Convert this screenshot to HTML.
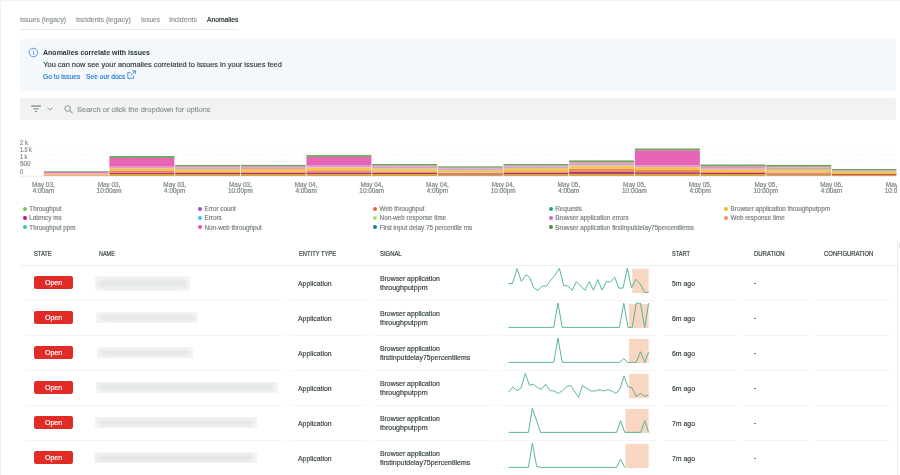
<!DOCTYPE html><html><head><meta charset="utf-8"><style>
*{margin:0;padding:0;box-sizing:border-box}
html,body{width:900px;height:475px;overflow:hidden;background:#fff;font-family:"Liberation Sans", sans-serif;}
#w{position:absolute;left:0;top:0;width:900px;height:475px;background:#fff;will-change:transform;overflow:hidden}
.a{position:absolute;white-space:nowrap;transform-origin:0 0;-webkit-text-stroke:0.18px currentColor}
.dot{position:absolute;width:4.4px;height:4.4px;border-radius:50%}
.badge{position:absolute;width:38.6px;height:12.6px;border-radius:2.2px;background:#e02b26}
.bx{position:absolute;background:#f4f5f5;overflow:hidden;border-radius:1px;filter:blur(0.6px)}
.bi{position:absolute;left:3px;right:3px;top:25%;bottom:25%;background:#e2e4e4;filter:blur(2px);border-radius:3px}
.sep{position:absolute;height:1px;background:#f4f5f5}
</style></head><body><div id="w">
<div class="a" style="left:0;top:0;width:1.3px;height:475px;background:#f0f1f1"></div>
<div class="a" style="left:0;top:0;width:900px;height:1px;background:#f3f4f4"></div>
<div class="a" style="left:20.10px;top:16.00px;font-size:7.413px;line-height:7.413px;color:#8c9393;transform:scaleX(0.9268);">Issues (legacy)</div>
<div class="a" style="left:76.10px;top:16.00px;font-size:7.413px;line-height:7.413px;color:#8c9393;transform:scaleX(0.9453);">Incidents (legacy)</div>
<div class="a" style="left:140.60px;top:16.00px;font-size:7.413px;line-height:7.413px;color:#8c9393;transform:scaleX(0.8916);">Issues</div>
<div class="a" style="left:169.40px;top:16.00px;font-size:7.413px;line-height:7.413px;color:#8c9393;transform:scaleX(0.9431);">Incidents</div>
<div class="a" style="left:206.70px;top:16.00px;font-size:7.413px;line-height:7.413px;color:#2a3437;transform:scaleX(0.9070);-webkit-text-stroke:0.22px #2a3437">Anomalies</div>
<div class="a" style="left:20px;top:28.8px;width:218px;height:1.2px;background:#e8ebeb"></div>
<div class="a" style="left:20px;top:38.5px;width:876px;height:52px;background:#f3f8fc;border-radius:2px"></div>
<svg class="a" style="left:28px;top:47px" width="11" height="11" viewBox="0 0 11 11"><circle cx="5.4" cy="5.5" r="4.25" fill="none" stroke="#3a82de" stroke-width="0.8"/><rect x="5.0" y="4.6" width="0.8" height="3.0" fill="#3a82de"/><rect x="5.0" y="3.0" width="0.8" height="0.8" fill="#3a82de"/></svg>
<div class="a" style="left:43.30px;top:49.00px;font-size:7.413px;line-height:7.413px;color:#293338;font-weight:bold;-webkit-text-stroke:0;transform:scaleX(0.9469);">Anomalies correlate with issues</div>
<div class="a" style="left:43.30px;top:61.00px;font-size:7.413px;line-height:7.413px;color:#363f42;">You can now see your anomalies correlated to issues in your issues feed</div>
<div class="a" style="left:43.20px;top:73.00px;font-size:7.267px;line-height:7.267px;color:#2a78d8;transform:scaleX(0.9256);">Go to issues</div>
<div class="a" style="left:85.60px;top:73.00px;font-size:7.267px;line-height:7.267px;color:#2a78d8;transform:scaleX(0.9197);">See our docs</div>
<svg class="a" style="left:126px;top:70px" width="11" height="10" viewBox="0 0 11 10"><path d="M4.6 2.6H1.8V8.3H7.6V5.6" fill="none" stroke="#2a78d8" stroke-width="0.8"/><path d="M6.2 0.8H9.4V4.0M9.4 0.8L4.6 5.6" fill="none" stroke="#2a78d8" stroke-width="0.8"/></svg>
<div class="a" style="left:20px;top:98.1px;width:876px;height:21.6px;background:#f1f3f3;border-radius:2px"></div>
<svg class="a" style="left:0;top:0" width="120" height="120" viewBox="0 0 120 120"><rect x="31.2" y="105.4" width="9.8" height="1.3" fill="#7f8686"/><rect x="33.4" y="108.3" width="5.4" height="1.1" fill="#7f8686"/><rect x="34.8" y="110.9" width="2.2" height="1.0" fill="#7f8686"/><path d="M47.5 107.7L50 110L52.5 107.7" fill="none" stroke="#7f8686" stroke-width="0.8"/><circle cx="67.7" cy="108.5" r="2.8" fill="none" stroke="#7f8686" stroke-width="0.95"/><path d="M69.8 110.6L72.8 113.5" stroke="#7f8686" stroke-width="1"/></svg>
<div class="a" style="left:77.40px;top:106.00px;font-size:7.413px;line-height:7.413px;color:#8c9393;transform:scaleX(1.0107);">Search or click the dropdown for options</div>
<div class="a" style="left:20.10px;top:140.00px;font-size:6.541px;line-height:6.541px;color:#7d8585;transform:scaleX(0.9128);">2 k</div>
<div class="a" style="left:20.10px;top:147.00px;font-size:6.541px;line-height:6.541px;color:#7d8585;transform:scaleX(0.8365);">1.5 k</div>
<div class="a" style="left:20.10px;top:154.00px;font-size:6.541px;line-height:6.541px;color:#7d8585;transform:scaleX(0.8329);">1 k</div>
<div class="a" style="left:20.10px;top:161.00px;font-size:6.541px;line-height:6.541px;color:#7d8585;transform:scaleX(0.9704);">500</div>
<div class="a" style="left:20.10px;top:169.00px;font-size:6.541px;line-height:6.541px;color:#7d8585;transform:scaleX(0.8540);">0</div>
<svg class="a" style="left:0;top:0" width="900" height="475" viewBox="0 0 900 475"><line x1="22" y1="147.3" x2="896" y2="147.3" stroke="#e2e5e5" stroke-width="0.7" stroke-dasharray="0.9 2.0"/><line x1="22" y1="154.4" x2="896" y2="154.4" stroke="#e2e5e5" stroke-width="0.7" stroke-dasharray="0.9 2.0"/><line x1="22" y1="161.5" x2="896" y2="161.5" stroke="#e2e5e5" stroke-width="0.7" stroke-dasharray="0.9 2.0"/><line x1="22" y1="168.6" x2="896" y2="168.6" stroke="#e2e5e5" stroke-width="0.7" stroke-dasharray="0.9 2.0"/><line x1="20" y1="176.4" x2="896" y2="176.4" stroke="#e8eaea" stroke-width="0.8"/><rect x="43.80" y="175.52" width="64.90" height="0.48" fill="#d3a143"/><rect x="43.80" y="174.64" width="64.90" height="0.88" fill="#e59a5a"/><rect x="43.80" y="173.84" width="64.90" height="0.80" fill="#f0b07a"/><rect x="43.80" y="173.12" width="64.90" height="0.72" fill="#dca0c0"/><rect x="43.80" y="171.92" width="64.90" height="1.20" fill="#e878b8"/><rect x="43.80" y="171.20" width="64.90" height="0.72" fill="#75a95c"/><rect x="109.40" y="174.00" width="64.98" height="2.00" fill="#d7a73f"/><rect x="109.40" y="172.80" width="64.98" height="1.20" fill="#a8336f"/><rect x="109.40" y="172.20" width="64.98" height="0.60" fill="#e2667a"/><rect x="109.40" y="170.40" width="64.98" height="1.80" fill="#f4874e"/><rect x="109.40" y="168.40" width="64.98" height="2.00" fill="#fdc244"/><rect x="109.40" y="166.60" width="64.98" height="1.80" fill="#dba2c6"/><rect x="109.40" y="157.90" width="64.98" height="8.70" fill="#e763b5"/><rect x="109.40" y="156.00" width="64.98" height="1.90" fill="#6fa35a"/><rect x="175.08" y="174.20" width="64.98" height="1.80" fill="#d7a73f"/><rect x="175.08" y="172.83" width="64.98" height="1.38" fill="#a8336f"/><rect x="175.08" y="171.88" width="64.98" height="0.95" fill="#f4874e"/><rect x="175.08" y="169.76" width="64.98" height="2.12" fill="#fdc244"/><rect x="175.08" y="168.91" width="64.98" height="0.85" fill="#c9c87c"/><rect x="175.08" y="167.54" width="64.98" height="1.38" fill="#cda3d6"/><rect x="175.08" y="166.38" width="64.98" height="1.16" fill="#e98fb8"/><rect x="175.08" y="165.00" width="64.98" height="1.38" fill="#6fa35a"/><rect x="240.76" y="174.10" width="64.98" height="1.90" fill="#d7a73f"/><rect x="240.76" y="172.80" width="64.98" height="1.30" fill="#a8336f"/><rect x="240.76" y="172.20" width="64.98" height="0.60" fill="#e2667a"/><rect x="240.76" y="169.00" width="64.98" height="3.20" fill="#fdc244"/><rect x="240.76" y="167.10" width="64.98" height="1.90" fill="#cda3d6"/><rect x="240.76" y="166.10" width="64.98" height="1.00" fill="#e98fb8"/><rect x="240.76" y="164.90" width="64.98" height="1.20" fill="#6fa35a"/><rect x="306.44" y="174.10" width="64.98" height="1.90" fill="#d7a73f"/><rect x="306.44" y="172.50" width="64.98" height="1.60" fill="#a8336f"/><rect x="306.44" y="171.90" width="64.98" height="0.60" fill="#e2667a"/><rect x="306.44" y="170.30" width="64.98" height="1.60" fill="#f4874e"/><rect x="306.44" y="168.10" width="64.98" height="2.20" fill="#fdc244"/><rect x="306.44" y="167.20" width="64.98" height="0.90" fill="#f0c8a0"/><rect x="306.44" y="165.60" width="64.98" height="1.60" fill="#cda3d6"/><rect x="306.44" y="156.90" width="64.98" height="8.70" fill="#e763b5"/><rect x="306.44" y="155.10" width="64.98" height="1.80" fill="#6fa35a"/><rect x="372.12" y="174.04" width="64.98" height="1.96" fill="#d7a73f"/><rect x="372.12" y="172.54" width="64.98" height="1.50" fill="#a8336f"/><rect x="372.12" y="171.50" width="64.98" height="1.04" fill="#f4874e"/><rect x="372.12" y="169.19" width="64.98" height="2.31" fill="#fdc244"/><rect x="372.12" y="168.27" width="64.98" height="0.92" fill="#c9c87c"/><rect x="372.12" y="166.77" width="64.98" height="1.50" fill="#cda3d6"/><rect x="372.12" y="165.50" width="64.98" height="1.27" fill="#e98fb8"/><rect x="372.12" y="164.00" width="64.98" height="1.50" fill="#6fa35a"/><rect x="437.80" y="174.54" width="64.98" height="1.46" fill="#d7a73f"/><rect x="437.80" y="173.39" width="64.98" height="1.15" fill="#a8336f"/><rect x="437.80" y="172.56" width="64.98" height="0.83" fill="#f4874e"/><rect x="437.80" y="170.78" width="64.98" height="1.77" fill="#fdc244"/><rect x="437.80" y="169.95" width="64.98" height="0.83" fill="#c9c87c"/><rect x="437.80" y="168.49" width="64.98" height="1.46" fill="#cda3d6"/><rect x="437.80" y="167.66" width="64.98" height="0.83" fill="#e98fb8"/><rect x="437.80" y="166.30" width="64.98" height="1.36" fill="#6fa35a"/><rect x="503.48" y="174.21" width="64.98" height="1.79" fill="#d7a73f"/><rect x="503.48" y="172.64" width="64.98" height="1.57" fill="#a8336f"/><rect x="503.48" y="171.29" width="64.98" height="1.35" fill="#f4874e"/><rect x="503.48" y="168.82" width="64.98" height="2.47" fill="#fdc244"/><rect x="503.48" y="167.93" width="64.98" height="0.90" fill="#c9c87c"/><rect x="503.48" y="166.36" width="64.98" height="1.57" fill="#cda3d6"/><rect x="503.48" y="165.46" width="64.98" height="0.90" fill="#e98fb8"/><rect x="503.48" y="164.00" width="64.98" height="1.46" fill="#6fa35a"/><rect x="569.16" y="173.90" width="64.98" height="2.10" fill="#d7a73f"/><rect x="569.16" y="171.60" width="64.98" height="2.30" fill="#a8336f"/><rect x="569.16" y="168.60" width="64.98" height="3.00" fill="#f4874e"/><rect x="569.16" y="166.30" width="64.98" height="2.30" fill="#fdc244"/><rect x="569.16" y="165.30" width="64.98" height="1.00" fill="#c9c87c"/><rect x="569.16" y="163.70" width="64.98" height="1.60" fill="#cda3d6"/><rect x="569.16" y="162.20" width="64.98" height="1.50" fill="#e98fb8"/><rect x="569.16" y="160.40" width="64.98" height="1.80" fill="#6fa35a"/><rect x="634.84" y="173.90" width="64.98" height="2.10" fill="#d7a73f"/><rect x="634.84" y="172.20" width="64.98" height="1.70" fill="#a8336f"/><rect x="634.84" y="169.90" width="64.98" height="2.30" fill="#f4874e"/><rect x="634.84" y="167.20" width="64.98" height="2.70" fill="#fdc244"/><rect x="634.84" y="165.50" width="64.98" height="1.70" fill="#cda3d6"/><rect x="634.84" y="150.30" width="64.98" height="15.20" fill="#e763b5"/><rect x="634.84" y="148.50" width="64.98" height="1.80" fill="#6fa35a"/><rect x="700.52" y="174.14" width="64.98" height="1.86" fill="#d7a73f"/><rect x="700.52" y="172.89" width="64.98" height="1.24" fill="#a8336f"/><rect x="700.52" y="171.96" width="64.98" height="0.93" fill="#f4874e"/><rect x="700.52" y="169.58" width="64.98" height="2.38" fill="#fdc244"/><rect x="700.52" y="168.54" width="64.98" height="1.04" fill="#cda3d6"/><rect x="700.52" y="166.36" width="64.98" height="2.18" fill="#e98fb8"/><rect x="700.52" y="164.50" width="64.98" height="1.86" fill="#6fa35a"/><rect x="766.20" y="174.59" width="64.98" height="1.41" fill="#d7a73f"/><rect x="766.20" y="173.38" width="64.98" height="1.21" fill="#b5526f"/><rect x="766.20" y="172.47" width="64.98" height="0.91" fill="#f4874e"/><rect x="766.20" y="170.65" width="64.98" height="1.82" fill="#fdc244"/><rect x="766.20" y="169.04" width="64.98" height="1.61" fill="#c9c87c"/><rect x="766.20" y="167.62" width="64.98" height="1.41" fill="#dba2c6"/><rect x="766.20" y="166.72" width="64.98" height="0.91" fill="#e98fb8"/><rect x="766.20" y="164.90" width="64.98" height="1.82" fill="#6fa35a"/><rect x="831.88" y="174.93" width="64.52" height="1.07" fill="#d7a73f"/><rect x="831.88" y="173.81" width="64.52" height="1.12" fill="#b5405f"/><rect x="831.88" y="172.06" width="64.52" height="1.75" fill="#fdc244"/><rect x="831.88" y="171.19" width="64.52" height="0.88" fill="#d8c890"/><rect x="831.88" y="170.07" width="64.52" height="1.12" fill="#d9a0b8"/><rect x="831.88" y="169.00" width="64.52" height="1.07" fill="#6fa35a"/></svg>
<div class="a" style="left:0;top:178px;width:897px;height:20px;overflow:hidden">
<div class="a" style="left:13.36999999999999px;top:4.2px;width:60px;text-align:center;font-size:6.4px;line-height:5.4px;color:#7d8585">May 03,<br>4:00am</div>
<div class="a" style="left:79.05px;top:4.2px;width:60px;text-align:center;font-size:6.4px;line-height:5.4px;color:#7d8585">May 03,<br>10:00am</div>
<div class="a" style="left:144.73000000000002px;top:4.2px;width:60px;text-align:center;font-size:6.4px;line-height:5.4px;color:#7d8585">May 03,<br>4:00pm</div>
<div class="a" style="left:210.41000000000003px;top:4.2px;width:60px;text-align:center;font-size:6.4px;line-height:5.4px;color:#7d8585">May 03,<br>10:00pm</div>
<div class="a" style="left:276.09000000000003px;top:4.2px;width:60px;text-align:center;font-size:6.4px;line-height:5.4px;color:#7d8585">May 04,<br>4:00am</div>
<div class="a" style="left:341.77000000000004px;top:4.2px;width:60px;text-align:center;font-size:6.4px;line-height:5.4px;color:#7d8585">May 04,<br>10:00am</div>
<div class="a" style="left:407.45000000000005px;top:4.2px;width:60px;text-align:center;font-size:6.4px;line-height:5.4px;color:#7d8585">May 04,<br>4:00pm</div>
<div class="a" style="left:473.13000000000005px;top:4.2px;width:60px;text-align:center;font-size:6.4px;line-height:5.4px;color:#7d8585">May 04,<br>10:00pm</div>
<div class="a" style="left:538.8100000000001px;top:4.2px;width:60px;text-align:center;font-size:6.4px;line-height:5.4px;color:#7d8585">May 05,<br>4:00am</div>
<div class="a" style="left:604.49px;top:4.2px;width:60px;text-align:center;font-size:6.4px;line-height:5.4px;color:#7d8585">May 05,<br>10:00am</div>
<div class="a" style="left:670.1700000000001px;top:4.2px;width:60px;text-align:center;font-size:6.4px;line-height:5.4px;color:#7d8585">May 05,<br>4:00pm</div>
<div class="a" style="left:735.85px;top:4.2px;width:60px;text-align:center;font-size:6.4px;line-height:5.4px;color:#7d8585">May 05,<br>10:00pm</div>
<div class="a" style="left:801.53px;top:4.2px;width:60px;text-align:center;font-size:6.4px;line-height:5.4px;color:#7d8585">May 06,<br>4:00am</div>
<div class="a" style="left:867.21px;top:4.2px;width:60px;text-align:center;font-size:6.4px;line-height:5.4px;color:#7d8585">May 06,<br>10:00am</div>
</div>
<div class="dot" style="left:22.5px;top:206.8px;background:#7cc245"></div>
<div class="a" style="left:29.30px;top:206.00px;font-size:6.323px;line-height:6.323px;color:#7a8282;">Throughput</div>
<div class="dot" style="left:22.5px;top:216.0px;background:#c0157e"></div>
<div class="a" style="left:29.30px;top:215.00px;font-size:6.323px;line-height:6.323px;color:#7a8282;">Latency ms</div>
<div class="dot" style="left:22.5px;top:225.10000000000002px;background:#40bfb0"></div>
<div class="a" style="left:29.30px;top:225.00px;font-size:6.323px;line-height:6.323px;color:#7a8282;">Throughput ppm</div>
<div class="dot" style="left:197.70000000000002px;top:206.8px;background:#9a52c8"></div>
<div class="a" style="left:204.50px;top:206.00px;font-size:6.323px;line-height:6.323px;color:#7a8282;">Error count</div>
<div class="dot" style="left:197.70000000000002px;top:216.0px;background:#3ec6ea"></div>
<div class="a" style="left:204.50px;top:215.00px;font-size:6.323px;line-height:6.323px;color:#7a8282;">Errors</div>
<div class="dot" style="left:197.70000000000002px;top:225.10000000000002px;background:#ea4fae"></div>
<div class="a" style="left:204.50px;top:225.00px;font-size:6.323px;line-height:6.323px;color:#7a8282;">Non-web throughput</div>
<div class="dot" style="left:372.8px;top:206.8px;background:#f2622f"></div>
<div class="a" style="left:379.60px;top:206.00px;font-size:6.323px;line-height:6.323px;color:#7a8282;">Web throughput</div>
<div class="dot" style="left:372.8px;top:216.0px;background:#a8de70"></div>
<div class="a" style="left:379.60px;top:215.00px;font-size:6.323px;line-height:6.323px;color:#7a8282;">Non-web response time</div>
<div class="dot" style="left:372.8px;top:225.10000000000002px;background:#167aa5"></div>
<div class="a" style="left:379.60px;top:225.00px;font-size:6.323px;line-height:6.323px;color:#7a8282;">First input delay 75 percentile ms</div>
<div class="dot" style="left:548.5px;top:206.8px;background:#1fa58f"></div>
<div class="a" style="left:555.30px;top:206.00px;font-size:6.323px;line-height:6.323px;color:#7a8282;">Requests</div>
<div class="dot" style="left:548.5px;top:216.0px;background:#c963d8"></div>
<div class="a" style="left:555.30px;top:215.00px;font-size:6.323px;line-height:6.323px;color:#7a8282;">Browser application errors</div>
<div class="dot" style="left:548.5px;top:225.10000000000002px;background:#508f3c"></div>
<div class="a" style="left:555.30px;top:225.00px;font-size:6.323px;line-height:6.323px;color:#7a8282;">Browser application firstinputdelay75percentilems</div>
<div class="dot" style="left:723.8px;top:206.8px;background:#fbb71e"></div>
<div class="a" style="left:730.60px;top:206.00px;font-size:6.323px;line-height:6.323px;color:#7a8282;">Browser application throughputppm</div>
<div class="dot" style="left:723.8px;top:216.0px;background:#f98b6c"></div>
<div class="a" style="left:730.60px;top:215.00px;font-size:6.323px;line-height:6.323px;color:#7a8282;">Web response time</div>
<div class="a" style="left:34.30px;top:251.00px;font-size:6.831px;line-height:6.831px;color:#3d4749;transform:scaleX(0.8426);-webkit-text-stroke:0.22px #3d4749">STATE</div>
<div class="a" style="left:98.90px;top:251.00px;font-size:6.831px;line-height:6.831px;color:#3d4749;transform:scaleX(0.8003);-webkit-text-stroke:0.22px #3d4749">NAME</div>
<div class="a" style="left:298.90px;top:251.00px;font-size:6.831px;line-height:6.831px;color:#3d4749;transform:scaleX(0.8472);-webkit-text-stroke:0.22px #3d4749">ENTITY TYPE</div>
<div class="a" style="left:380.20px;top:251.00px;font-size:6.831px;line-height:6.831px;color:#3d4749;transform:scaleX(0.8615);-webkit-text-stroke:0.22px #3d4749">SIGNAL</div>
<div class="a" style="left:672.00px;top:251.00px;font-size:6.831px;line-height:6.831px;color:#3d4749;transform:scaleX(0.8227);-webkit-text-stroke:0.22px #3d4749">START</div>
<div class="a" style="left:753.90px;top:251.00px;font-size:6.831px;line-height:6.831px;color:#3d4749;transform:scaleX(0.8698);-webkit-text-stroke:0.22px #3d4749">DURATION</div>
<div class="a" style="left:823.50px;top:251.00px;font-size:6.831px;line-height:6.831px;color:#3d4749;transform:scaleX(0.8679);-webkit-text-stroke:0.22px #3d4749">CONFIGURATION</div>
<div class="a" style="left:19.8px;top:264.9px;width:877px;height:1px;background:#eceeee"></div>
<div class="a" style="left:897.2px;top:241.3px;width:1.1px;height:234px;background:#eceeee"></div>
<div class="a" style="left:898.9px;top:242.9px;width:1.1px;height:5px;background:#e2e4e4"></div>
<div class="badge" style="left:34.3px;top:276.3px"></div>
<div class="a" style="left:45.00px;top:279.00px;font-size:7.558px;line-height:7.558px;color:#ffffff;transform:scaleX(0.9308);">Open</div>
<div class="bx" style="left:95.1px;top:276.0px;width:94.6px;height:15.100000000000023px"><div class="bi"></div></div>
<div class="a" style="left:298.40px;top:280.00px;font-size:7.703px;line-height:7.703px;color:#333d40;transform:scaleX(0.8946);">Application</div>
<div class="a" style="left:380.40px;top:275.00px;font-size:7.558px;line-height:7.558px;color:#333d40;transform:scaleX(0.9099);">Browser application</div>
<div class="a" style="left:380.40px;top:284.00px;font-size:7.558px;line-height:7.558px;color:#333d40;transform:scaleX(0.9365);">throughputppm</div>
<div class="a" style="left:671.90px;top:280.00px;font-size:7.703px;line-height:7.703px;color:#333d40;transform:scaleX(0.8991);">5m ago</div>
<div class="a" style="left:753.9px;top:282.7px;width:2.1px;height:0.8px;background:#7b8385"></div>
<div class="sep" style="left:25.0px;top:299.7px;width:258.7px"></div>
<div class="sep" style="left:290px;top:299.7px;width:76px"></div>
<div class="sep" style="left:371.7px;top:299.7px;width:121.60000000000002px"></div>
<div class="sep" style="left:499.3px;top:299.7px;width:157.09999999999997px"></div>
<div class="sep" style="left:663.6px;top:299.7px;width:75.69999999999993px"></div>
<div class="sep" style="left:744.3px;top:299.7px;width:65.0px"></div>
<div class="sep" style="left:814.7px;top:299.7px;width:76.39999999999998px"></div>
<div class="badge" style="left:34.3px;top:311.3px"></div>
<div class="a" style="left:45.00px;top:314.00px;font-size:7.558px;line-height:7.558px;color:#ffffff;transform:scaleX(0.9308);">Open</div>
<div class="bx" style="left:96.0px;top:312.0px;width:102.0px;height:11.0px"><div class="bi"></div></div>
<div class="a" style="left:298.40px;top:315.00px;font-size:7.703px;line-height:7.703px;color:#333d40;transform:scaleX(0.8946);">Application</div>
<div class="a" style="left:380.40px;top:310.00px;font-size:7.558px;line-height:7.558px;color:#333d40;transform:scaleX(0.9099);">Browser application</div>
<div class="a" style="left:380.40px;top:319.00px;font-size:7.558px;line-height:7.558px;color:#333d40;transform:scaleX(0.9365);">throughputppm</div>
<div class="a" style="left:671.90px;top:315.00px;font-size:7.703px;line-height:7.703px;color:#333d40;transform:scaleX(0.8991);">6m ago</div>
<div class="a" style="left:753.9px;top:317.7px;width:2.1px;height:0.8px;background:#7b8385"></div>
<div class="sep" style="left:25.0px;top:334.7px;width:258.7px"></div>
<div class="sep" style="left:290px;top:334.7px;width:76px"></div>
<div class="sep" style="left:371.7px;top:334.7px;width:121.60000000000002px"></div>
<div class="sep" style="left:499.3px;top:334.7px;width:157.09999999999997px"></div>
<div class="sep" style="left:663.6px;top:334.7px;width:75.69999999999993px"></div>
<div class="sep" style="left:744.3px;top:334.7px;width:65.0px"></div>
<div class="sep" style="left:814.7px;top:334.7px;width:76.39999999999998px"></div>
<div class="badge" style="left:34.3px;top:346.3px"></div>
<div class="a" style="left:45.00px;top:349.00px;font-size:7.558px;line-height:7.558px;color:#ffffff;transform:scaleX(0.9308);">Open</div>
<div class="bx" style="left:97px;top:347.2px;width:95.5px;height:10.5px"><div class="bi"></div></div>
<div class="a" style="left:298.40px;top:350.00px;font-size:7.703px;line-height:7.703px;color:#333d40;transform:scaleX(0.8946);">Application</div>
<div class="a" style="left:380.40px;top:345.00px;font-size:7.558px;line-height:7.558px;color:#333d40;transform:scaleX(0.9099);">Browser application</div>
<div class="a" style="left:380.40px;top:354.00px;font-size:7.558px;line-height:7.558px;color:#333d40;transform:scaleX(0.9226);">firstinputdelay75percentilems</div>
<div class="a" style="left:671.90px;top:350.00px;font-size:7.703px;line-height:7.703px;color:#333d40;transform:scaleX(0.8991);">6m ago</div>
<div class="a" style="left:753.9px;top:352.7px;width:2.1px;height:0.8px;background:#7b8385"></div>
<div class="sep" style="left:25.0px;top:369.7px;width:258.7px"></div>
<div class="sep" style="left:290px;top:369.7px;width:76px"></div>
<div class="sep" style="left:371.7px;top:369.7px;width:121.60000000000002px"></div>
<div class="sep" style="left:499.3px;top:369.7px;width:157.09999999999997px"></div>
<div class="sep" style="left:663.6px;top:369.7px;width:75.69999999999993px"></div>
<div class="sep" style="left:744.3px;top:369.7px;width:65.0px"></div>
<div class="sep" style="left:814.7px;top:369.7px;width:76.39999999999998px"></div>
<div class="badge" style="left:34.3px;top:381.3px"></div>
<div class="a" style="left:45.00px;top:384.00px;font-size:7.558px;line-height:7.558px;color:#ffffff;transform:scaleX(0.9308);">Open</div>
<div class="bx" style="left:96.2px;top:381.7px;width:182.2px;height:11.100000000000023px"><div class="bi"></div></div>
<div class="a" style="left:298.40px;top:385.00px;font-size:7.703px;line-height:7.703px;color:#333d40;transform:scaleX(0.8946);">Application</div>
<div class="a" style="left:380.40px;top:380.00px;font-size:7.558px;line-height:7.558px;color:#333d40;transform:scaleX(0.9099);">Browser application</div>
<div class="a" style="left:380.40px;top:389.00px;font-size:7.558px;line-height:7.558px;color:#333d40;transform:scaleX(0.9365);">throughputppm</div>
<div class="a" style="left:671.90px;top:385.00px;font-size:7.703px;line-height:7.703px;color:#333d40;transform:scaleX(0.8991);">6m ago</div>
<div class="a" style="left:753.9px;top:387.7px;width:2.1px;height:0.8px;background:#7b8385"></div>
<div class="sep" style="left:25.0px;top:404.7px;width:258.7px"></div>
<div class="sep" style="left:290px;top:404.7px;width:76px"></div>
<div class="sep" style="left:371.7px;top:404.7px;width:121.60000000000002px"></div>
<div class="sep" style="left:499.3px;top:404.7px;width:157.09999999999997px"></div>
<div class="sep" style="left:663.6px;top:404.7px;width:75.69999999999993px"></div>
<div class="sep" style="left:744.3px;top:404.7px;width:65.0px"></div>
<div class="sep" style="left:814.7px;top:404.7px;width:76.39999999999998px"></div>
<div class="badge" style="left:34.3px;top:416.3px"></div>
<div class="a" style="left:45.00px;top:419.00px;font-size:7.558px;line-height:7.558px;color:#ffffff;transform:scaleX(0.9308);">Open</div>
<div class="bx" style="left:94.9px;top:416.8px;width:162.20000000000002px;height:11.5px"><div class="bi"></div></div>
<div class="a" style="left:298.40px;top:420.00px;font-size:7.703px;line-height:7.703px;color:#333d40;transform:scaleX(0.8946);">Application</div>
<div class="a" style="left:380.40px;top:415.00px;font-size:7.558px;line-height:7.558px;color:#333d40;transform:scaleX(0.9099);">Browser application</div>
<div class="a" style="left:380.40px;top:424.00px;font-size:7.558px;line-height:7.558px;color:#333d40;transform:scaleX(0.9365);">throughputppm</div>
<div class="a" style="left:671.90px;top:420.00px;font-size:7.703px;line-height:7.703px;color:#333d40;transform:scaleX(0.8991);">7m ago</div>
<div class="a" style="left:753.9px;top:422.7px;width:2.1px;height:0.8px;background:#7b8385"></div>
<div class="sep" style="left:25.0px;top:439.7px;width:258.7px"></div>
<div class="sep" style="left:290px;top:439.7px;width:76px"></div>
<div class="sep" style="left:371.7px;top:439.7px;width:121.60000000000002px"></div>
<div class="sep" style="left:499.3px;top:439.7px;width:157.09999999999997px"></div>
<div class="sep" style="left:663.6px;top:439.7px;width:75.69999999999993px"></div>
<div class="sep" style="left:744.3px;top:439.7px;width:65.0px"></div>
<div class="sep" style="left:814.7px;top:439.7px;width:76.39999999999998px"></div>
<div class="badge" style="left:34.3px;top:451.3px"></div>
<div class="a" style="left:45.00px;top:454.00px;font-size:7.558px;line-height:7.558px;color:#ffffff;transform:scaleX(0.9308);">Open</div>
<div class="bx" style="left:94.0px;top:452.3px;width:163.10000000000002px;height:11.099999999999966px"><div class="bi"></div></div>
<div class="a" style="left:298.40px;top:455.00px;font-size:7.703px;line-height:7.703px;color:#333d40;transform:scaleX(0.8946);">Application</div>
<div class="a" style="left:380.40px;top:450.00px;font-size:7.558px;line-height:7.558px;color:#333d40;transform:scaleX(0.9099);">Browser application</div>
<div class="a" style="left:380.40px;top:459.00px;font-size:7.558px;line-height:7.558px;color:#333d40;transform:scaleX(0.9226);">firstinputdelay75percentilems</div>
<div class="a" style="left:671.90px;top:455.00px;font-size:7.703px;line-height:7.703px;color:#333d40;transform:scaleX(0.8991);">7m ago</div>
<div class="a" style="left:753.9px;top:457.7px;width:2.1px;height:0.8px;background:#7b8385"></div>
<svg class="a" style="left:0;top:0" width="900" height="475" viewBox="0 0 900 475"><g transform="translate(500,265) scale(0.17777777777777778)"><rect x="744" y="22" width="92" height="136" fill="#f9d6c2"/><polyline points="48,104 70,104 96,20 120,92 146,56 166,68 190,128 214,142 238,118 262,118 286,84 310,58 334,18 358,116 382,118 406,142 430,94 478,142 502,94 526,142 550,82 574,142 598,94 622,94 646,70 668,130 692,130 716,18 740,128 764,80 790,108 814,154 836,154" fill="none" stroke="#52b58a" stroke-width="5.4" stroke-linejoin="round"/></g><g transform="translate(500,300) scale(0.17777777777777778)"><rect x="726" y="22" width="110" height="136" fill="#f9d6c2"/><polyline points="48,154 302,154 326,18 350,154 672,154 696,18 720,154 744,154 766,18 790,18 814,154 836,18" fill="none" stroke="#52b58a" stroke-width="5.4" stroke-linejoin="round"/></g><g transform="translate(500,335) scale(0.17777777777777778)"><rect x="726" y="22" width="110" height="136" fill="#f9d6c2"/><polyline points="48,154 302,154 326,18 350,154 672,154 696,134 720,154 766,154 790,94 814,154 836,96" fill="none" stroke="#52b58a" stroke-width="5.4" stroke-linejoin="round"/></g><g transform="translate(500,370) scale(0.17777777777777778)"><rect x="726" y="22" width="110" height="136" fill="#f9d6c2"/><polyline points="48,124 72,96 96,116 118,102 142,20 166,86 188,80 212,100 234,108 256,80 282,116 304,118 328,132 352,116 374,94 398,88 442,154 464,88 488,104 512,118 536,118 558,110 582,118 606,110 628,118 652,132 674,106 698,36 720,94 742,100 766,148 790,132 814,148 836,140" fill="none" stroke="#52b58a" stroke-width="5.4" stroke-linejoin="round"/></g><g transform="translate(500,405) scale(0.17777777777777778)"><rect x="706" y="22" width="130" height="136" fill="#f9d6c2"/><polyline points="48,154 160,154 182,18 228,154 656,154 678,88 702,154 792,154 814,88 836,154" fill="none" stroke="#52b58a" stroke-width="5.4" stroke-linejoin="round"/></g><g transform="translate(500,440) scale(0.17777777777777778)"><rect x="706" y="22" width="130" height="136" fill="#f9d6c2"/><polyline points="48,154 160,154 182,18 206,148 228,154 656,154 678,108 702,154" fill="none" stroke="#52b58a" stroke-width="5.4" stroke-linejoin="round"/></g></svg>
</div></body></html>
